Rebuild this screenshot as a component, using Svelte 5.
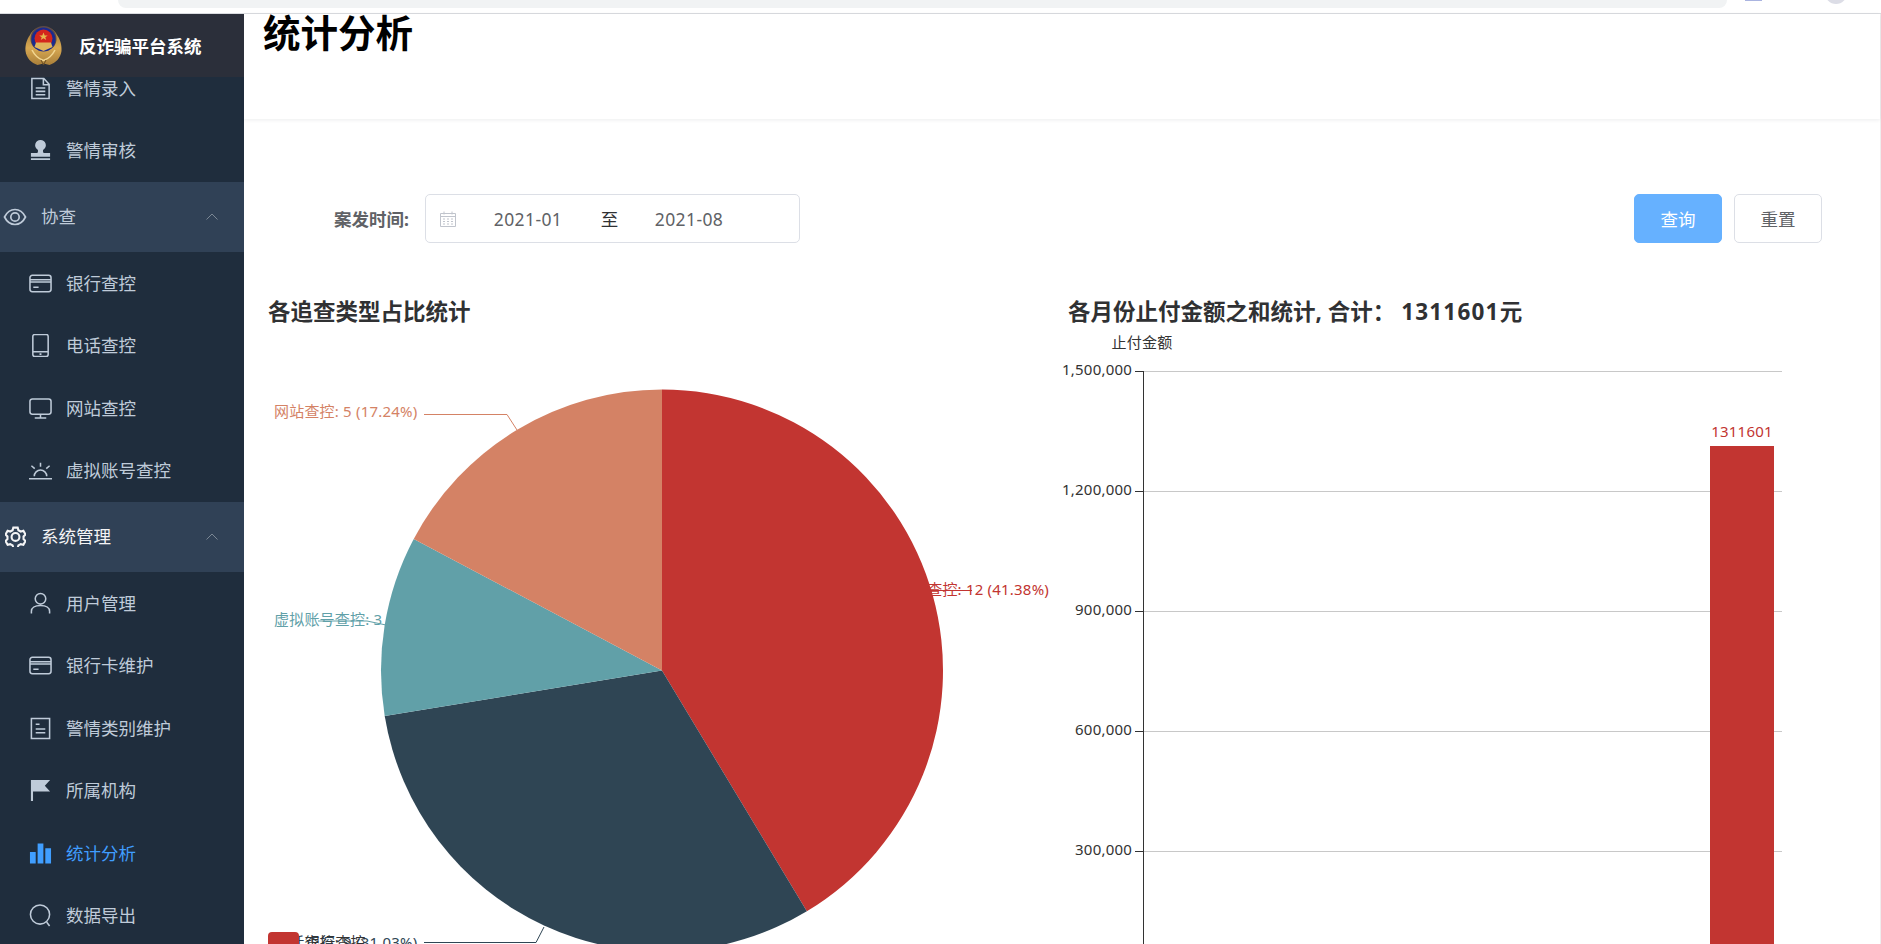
<script>
  const icons = {
    doc: 'M3 1.500h12.500L21 7.500v15H3zM15 1.500v6.500h6M7 11.500h10M7 15h10M7 18.500h10',
    stamp: 'M12 1a5.500 5.500 0 0 1 3.200 10c-.8.7-.9 2 0 3.500h6.800v4H2v-4h6.800c.9-1.500.8-2.800 0-3.500A5.500 5.500 0 0 1 12 1zM2 20h20v2H2z',
    card: 'M3.500 3.500h17a2.500 2.500 0 0 1 2.500 2.500v12a2.500 2.500 0 0 1-2.500 2.500h-17A2.500 2.500 0 0 1 1 18V6a2.500 2.500 0 0 1 2.500-2.500zM1 8h22M1 10.500h22M4.500 16h5.500',
    phone: 'M6 .5h12a2 2 0 0 1 2 2v19a2 2 0 0 1-2 2H6a2 2 0 0 1-2-2v-19a2 2 0 0 1 2-2zM4 18.500h16M11 21h2',
    monitor: 'M3.500 2h17A2.500 2.500 0 0 1 23 4.500v11a2.500 2.500 0 0 1-2.500 2.500h-17A2.500 2.500 0 0 1 1 15.500v-11A2.500 2.500 0 0 1 3.500 2zM12 18v4M6 22h12',
    dawn: 'M0 20.500h24M5.500 18a6.500 6.500 0 0 1 13 0M12 4v4M2.500 7l3.500 3M21.500 7l-3.500 3',
    user: 'M12 1.500a5.500 5.500 0 1 1 0 11 5.500 5.500 0 0 1 0-11zM2.500 22.500V20c0-3.500 3.500-6 9.500-6s9.500 2.500 9.500 6v2.500',
    list: 'M2.500 1.500h19v21h-19zM7 7.500h4M7 12.500h10M7 16.500h10',
    flag: 'M2 1h20l-5.500 6 5.500 6H4.200v10H2z',
    bars: 'M1 10.500h6v12H1zM9 1.500h6v21H9zM17 6.500h6v16h-6z',
    search: 'M11.500 1a10 10 0 1 1 0 20 10 10 0 0 1 0-20zM18.500 19l3 4',
    eye: 'M1.500 12C4 7 7.800 4.500 12 4.500S20 7 22.500 12c-2.500 5-6.300 7.500-10.500 7.500S4 17 1.500 12zM12 7.800a4.200 4.200 0 1 1 0 8.400 4.200 4.200 0 0 1 0-8.400z',
    gear: 'M9.500 1.800h5l.8 3 2.700 1.500 3-.8 2.400 4.300-2.200 2.200v3l2.200 2.200-2.400 4.300-3-.8-2.700 1.500-.8 3h-5l-.8-3L6 20.700l-3 .8-2.400-4.300 2.200-2.200v-3L.6 9.800 3 5.500l3 .8 2.700-1.500zM12 8a4.500 4.500 0 1 1 0 9 4.500 4.500 0 0 1 0-9z'
  };
  const filled = ['stamp', 'flag', 'bars'];

  const menu = [
    { label: '警情录入', icon: 'doc' },
    { label: '警情审核', icon: 'stamp' },
    { label: '协查', icon: 'eye', head: true },
    { label: '银行查控', icon: 'card' },
    { label: '电话查控', icon: 'phone' },
    { label: '网站查控', icon: 'monitor' },
    { label: '虚拟账号查控', icon: 'dawn' },
    { label: '系统管理', icon: 'gear', head: true, bright: true },
    { label: '用户管理', icon: 'user' },
    { label: '银行卡维护', icon: 'card' },
    { label: '警情类别维护', icon: 'list' },
    { label: '所属机构', icon: 'flag' },
    { label: '统计分析', icon: 'bars', active: true },
    { label: '数据导出', icon: 'search' }
  ];

  // pie chart, coordinates are page pixels (see the svg viewBox)
  const cx = 662;
  const cy = 670.5;
  const r = 281;
  const data = [
    { value: 12, color: '#c23531' },
    { value: 9, color: '#2f4554' },
    { value: 3, color: '#61a0a8' },
    { value: 5, color: '#d48265' }
  ];
  const total = data.reduce((sum, d) => sum + d.value, 0);

  function point(angle) {
    return `${cx + r * Math.sin(angle)} ${cy - r * Math.cos(angle)}`;
  }

  let start = 0;
  const slices = data.map((d) => {
    const sweep = (d.value / total) * Math.PI * 2;
    const path = `M${cx} ${cy}L${point(start)}A${r} ${r} 0 ${sweep > Math.PI ? 1 : 0} 1 ${point(start + sweep)}Z`;
    start += sweep;
    return { path, color: d.color };
  });

  const pieLabels = [
    { text: '银行查控: 12 (41.38%)', x: 1049, y: 591, anchor: 'end', color: '#c23531', line: '925,590.5 972,590.5' },
    { text: '电话查控: 9 (31.03%)', x: 274, y: 944, anchor: 'start', color: '#2f4554', line: '544,927 536,942.5 424,942.5' },
    { text: '虚拟账号查控: 3 (10.34%)', x: 274, y: 621, anchor: 'start', color: '#61a0a8', line: '386,625 367,621 318,621' },
    { text: '网站查控: 5 (17.24%)', x: 274, y: 413, anchor: 'start', color: '#d48265', line: '517,430 507,414.5 424,414.5' }
  ];

  const ticks = [
    { label: '1,500,000', y: 371.5 },
    { label: '1,200,000', y: 491.5 },
    { label: '900,000', y: 611.5 },
    { label: '600,000', y: 731.5 },
    { label: '300,000', y: 851.5 }
  ];
</script>

<div class="page">
  <div class="browser-strip">
    <div class="address"></div>
    <div class="ext"></div>
    <div class="avatar"></div>
  </div>

  <div class="shell">
    <aside class="sidebar">
      <div class="logo">
        <svg class="emblem" viewBox="0 0 37 40" aria-hidden="true">
          <defs>
            <linearGradient id="gold" x1="0" y1="0" x2="0" y2="1">
              <stop offset="0" stop-color="#9a7238" />
              <stop offset="0.55" stop-color="#d8a952" />
              <stop offset="1" stop-color="#a97f3a" />
            </linearGradient>
          </defs>
          <path d="M18.500 1C12 1 7 4 5 9 2 13 0 19 .5 25c.8 7 6 12 12 14l6-1.500 6 1.500c6-2 11.200-7 12-14 .5-6-1.500-12-4.500-16-2-5-7-8-13.500-8z" fill="url(#gold)" />
          <path d="M18.500 0C10.800 0 5.500 5.500 5.500 13c0 5 3 9 6 10h14c3-1 6-5 6-10 0-7.500-5.300-13-13-13z" fill="#5e4b46" />
          <circle cx="18.500" cy="13.500" r="12" fill="#1b2a90" />
          <circle cx="18.500" cy="12.500" r="9" fill="#d4261d" />
          <path d="M18.500 6.500l1.200 2.900h3l-2.400 1.800.9 2.900-2.700-1.800-2.700 1.800.9-2.900-2.400-1.800h3z" fill="#e6b94e" />
          <path d="M11 16.500h15l1.500 4.500L18.500 25 9.500 21z" fill="#e0b45c" />
          <path d="M7 24c3 6 7 9 11.500 10.500C23 33 27 30 30 24" fill="none" stroke="#f2d792" stroke-width="1.500" />
          <path d="M16 34l2.500 5 2.500-5" fill="none" stroke="#6b4f24" />
        </svg>
        <span>反诈骗平台系统</span>
      </div>
      <nav class="menu">
        {#each menu as item}
          <div class="item" class:head={item.head} class:bright={item.bright} class:active={item.active}>
            <svg class="icon" class:filled={filled.includes(item.icon)} class:gear={item.icon === 'gear'} viewBox="0 0 24 24" aria-hidden="true">
              <path d={icons[item.icon]} />
            </svg>
            <span>{item.label}</span>
            {#if item.head}
              <svg class="arrow" viewBox="0 0 12 7" aria-hidden="true"><path d="M.5 6.500L6 1l5.500 5.500" /></svg>
            {/if}
          </div>
        {/each}
      </nav>
    </aside>

    <main class="content">
      <header class="page-header"><h1>统计分析</h1></header>

      <div class="filter">
        <span class="filter-label">案发时间:</span>
        <div class="range">
          <svg class="cal" viewBox="0 0 16 16" aria-hidden="true">
            <path d="M.5 2.500h15v13H.5zM.5 5.500h15M4 .5v3M12 .5v3" />
            <path class="dots" d="M3 8h2M7 8h2M11 8h2M3 10.500h2M7 10.500h2M11 10.500h2M3 13h2M7 13h2M11 13h2" />
          </svg>
          <span class="date first">2021-01</span>
          <span class="sep">至</span>
          <span class="date">2021-08</span>
        </div>
        <div class="actions">
          <button class="btn primary">查询</button>
          <button class="btn">重置</button>
        </div>
      </div>

      <div class="charts">
        <section class="chart">
          <h2>各追查类型占比统计</h2>
          <svg width="799" height="617" viewBox="268 327 799 617">
            {#each pieLabels as l}
              <text x={l.x} y={l.y} text-anchor={l.anchor} dominant-baseline="middle" fill={l.color} class="label">{l.text}</text>
            {/each}
            {#each slices as s}
              <path d={s.path} fill={s.color} />
            {/each}
            {#each pieLabels as l}
              <polyline points={l.line} fill="none" stroke={l.color} />
            {/each}
            <rect x="268" y="932" width="31" height="18" rx="4" fill="#c23531" />
            <text x="305" y="944" dominant-baseline="middle" fill="#333" class="label">银行查控</text>
          </svg>
        </section>

        <section class="chart">
          <h2 class="shifted">各月份止付金额之和统计, 合计： <span class="num">1311601</span>元</h2>
          <svg class="bar-chart" width="814" height="617" viewBox="1067 327 814 617">
            <text x="1142" y="344" text-anchor="middle" dominant-baseline="middle" fill="#333" class="label">止付金额</text>
            {#each ticks as t}
              <line x1="1143" x2="1782" y1={t.y} y2={t.y} stroke="#c8c8c8" />
              <line x1="1135" x2="1143" y1={t.y} y2={t.y} stroke="#333" />
              <text x="1132" y={t.y - 0.5} text-anchor="end" dominant-baseline="middle" fill="#333" class="label">{t.label}</text>
            {/each}
            <line x1="1143.5" x2="1143.5" y1="371" y2="944" stroke="#333" />
            <rect x="1710" y="446" width="64" height="498" fill="#c23531" />
            <text x="1742" y="433" text-anchor="middle" dominant-baseline="middle" fill="#c23531" class="label">1311601</text>
          </svg>
        </section>
      </div>
    </main>
  </div>
</div>

<style>
  :global(body) {
    margin: 0;
    background: #fff;
  }

  .page {
    height: 944px;
    overflow: hidden;
    font-family: "Noto Sans", "Noto Sans CJK SC", sans-serif;
    font-size: 17.5px;
    display: flex;
    flex-direction: column;
  }

  /* remnant of the browser toolbar above the page */
  .browser-strip {
    height: 13px;
    flex-shrink: 0;
    display: flex;
    align-items: flex-start;
    padding-left: 118px;
    border-bottom: 1px solid #dadce0;
    overflow: hidden;
  }

  .address {
    width: 1609px;
    height: 8px;
    background: #f1f3f4;
    border-radius: 0 0 16px 16px;
  }

  .ext {
    width: 17px;
    height: 1px;
    margin-left: 18px;
    background: #aab4e0;
  }

  .avatar {
    width: 22px;
    height: 22px;
    margin: -18px 0 0 63px;
    border-radius: 50%;
    background: #dcdde6;
  }

  .shell {
    flex: 1;
    display: flex;
    min-height: 0;
  }

  .sidebar {
    width: 244px;
    flex-shrink: 0;
    background: #1f2d3d;
    overflow: hidden;
  }

  .logo {
    position: relative;
    z-index: 1;
    height: 63px;
    display: flex;
    align-items: center;
    gap: 17px;
    padding-left: 25px;
    background: #2b2f3a;
    color: #fff;
    font-weight: 700;
  }

  .emblem {
    width: 37px;
    height: 40px;
  }

  .menu {
    margin-top: -20.25px;
  }

  .item {
    height: 62.5px;
    display: flex;
    align-items: center;
    padding-left: 28.500px;
    color: #bfcbd9;
  }

  .item span {
    margin-left: 14.500px;
    position: relative;
    top: -1px;
  }

  .item.head {
    height: 70px;
    padding-left: 3px;
    background: #304156;
    position: relative;
  }

  .item.head span {
    margin-left: 14px;
  }

  .item.bright {
    color: #f4f4f5;
  }

  .item.active {
    color: #409eff;
  }

  .icon {
    width: 23px;
    height: 23px;
    flex-shrink: 0;
    fill: none;
    stroke: currentColor;
    stroke-width: 1.600;
  }

  .icon.filled {
    fill: currentColor;
    stroke: none;
  }

  .head .icon {
    width: 24px;
    height: 24px;
    stroke-width: 1.700;
  }

  .head .icon.gear {
    width: 21px;
    height: 21px;
    margin: 0 1.500px;
    stroke-width: 2.400;
  }

  .arrow {
    position: absolute;
    right: 26px;
    top: 31px;
    width: 12px;
    height: 7px;
    fill: none;
    stroke: #7b8794;
  }

  .content {
    flex: 1;
    min-width: 0;
    border-right: 1px solid #eee;
  }

  .page-header {
    height: 105px;
    box-shadow: 0 1px 4px rgba(0, 21, 41, 0.08);
    padding-left: 19px;
  }

  h1 {
    margin: 0;
    font-size: 37.5px;
    line-height: 38px;
    font-weight: 700;
    color: #000;
  }

  .filter {
    display: flex;
    align-items: center;
    height: 49px;
    margin-top: 75px;
    padding: 0 58px 0 90px;
  }

  .filter-label {
    width: 76px;
    margin-right: 15px;
    white-space: nowrap;
    font-weight: 700;
    color: #606266;
  }

  .range {
    width: 375px;
    height: 49px;
    box-sizing: border-box;
    display: flex;
    align-items: center;
    border: 1px solid #dcdfe6;
    border-radius: 5px;
    color: #606266;
  }

  .cal {
    width: 16px;
    height: 16px;
    margin-left: 14px;
    fill: none;
    stroke: #c0c4cc;
  }

  .date {
    width: 140px;
    text-align: center;
    letter-spacing: 0.4px;
  }

  .date.first {
    width: 144px;
  }

  .sep {
    width: 19px;
    text-align: center;
    color: #303133;
  }

  .actions {
    margin-left: auto;
    display: flex;
    gap: 12px;
  }

  .btn {
    width: 88px;
    height: 49px;
    padding: 0;
    font: inherit;
    color: #606266;
    background: #fff;
    border: 1px solid #dcdfe6;
    border-radius: 5px;
  }

  .btn.primary {
    color: #fff;
    background: #66b1ff;
    border-color: #66b1ff;
  }

  .charts {
    display: flex;
    margin-top: 54px;
    padding-left: 24px;
  }

  .chart {
    width: 799px;
    flex-shrink: 0;
  }

  .chart h2 {
    margin: 0;
    height: 30px;
    font-size: 22.5px;
    line-height: 30px;
    font-weight: 700;
    color: #303133;
    white-space: nowrap;
  }

  .chart h2.shifted {
    padding-left: 1px;
  }

  .num {
    letter-spacing: 1.200px;
  }

  .chart svg {
    display: block;
  }

  .bar-chart {
    overflow: visible;
  }

  .label {
    font-size: 15px;
    letter-spacing: 0.2px;
  }
</style>
